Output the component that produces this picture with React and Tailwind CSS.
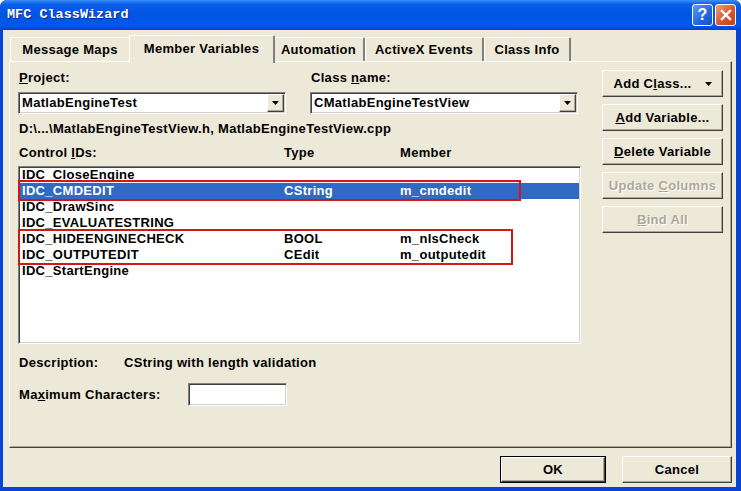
import React from 'react';

const raised =
  "border border-t-white border-l-white border-r-[#404040] border-b-[#404040] shadow-[inset_-1px_-1px_0_#aca899]";
const sunken =
  "border border-t-[#808080] border-l-[#808080] border-r-white border-b-white shadow-[inset_1px_1px_0_#404040,inset_-1px_-1px_0_#d4d0c8]";

const tabs = [
  { label: 'Message Maps', w: 'w-[121px]' },
  { label: 'Member Variables', w: 'w-[146px]', active: true },
  { label: 'Automation', w: 'w-[92px]' },
  { label: 'ActiveX Events', w: 'w-[119px]' },
  { label: 'Class Info', w: 'w-[87px]' },
];

const rows = [
  { id: 'IDC_CloseEngine' },
  { id: 'IDC_CMDEDIT', type: 'CString', member: 'm_cmdedit', selected: true },
  { id: 'IDC_DrawSinc' },
  { id: 'IDC_EVALUATESTRING' },
  { id: 'IDC_HIDEENGINECHECK', type: 'BOOL', member: 'm_nIsCheck' },
  { id: 'IDC_OUTPUTEDIT', type: 'CEdit', member: 'm_outputedit' },
  { id: 'IDC_StartEngine' },
];

const Arrow = () => (
  <svg width="7" height="4" viewBox="0 0 7 4">
    <path d="M0 0h7L3.5 4z" fill="#000" />
  </svg>
);

const Combo = ({ value }) => (
  <div className={`w-[268px] h-[22px] bg-white flex items-center pl-[3px] pr-[1px] ${sunken}`}>
    <span className="flex-1">{value}</span>
    <div className={`w-[17px] h-[18px] bg-[#ece9d8] flex items-center justify-center ${raised}`}>
      <Arrow />
    </div>
  </div>
);

const SideButton = ({ children, disabled }) => (
  <button
    type="button"
    className={`w-[121px] h-[27px] bg-[#ece9d8] flex items-center justify-center font-bold ${raised} ${
      disabled ? 'text-[#aca899] text-shadow-[1px_1px_0_#ffffff]' : 'text-black'
    }`}
  >
    {children}
  </button>
);

export default function App() {
  return (
    <div className="w-[741px] h-[491px] bg-[#0842d6] rounded-t-[7px] flex flex-col overflow-hidden font-['Liberation_Sans',Arial,sans-serif] text-[13px] tracking-[0.3px] leading-[16px] text-black">
      {/* Title bar */}
      <div className="h-[30px] shrink-0 flex items-center pl-[7px] pr-[5px] bg-[linear-gradient(180deg,#3d8ff7_0%,#0a5fe8_14%,#0054e3_45%,#0058eb_85%,#0040d0_100%)]">
        <span className="flex-1 text-white font-bold text-[13.5px] tracking-normal font-['Liberation_Mono',monospace] [text-shadow:1px_1px_0_#0a2a8c]">
          MFC ClassWizard
        </span>
        <div className="flex gap-[2px]">
          <div className="w-[21px] h-[22px] rounded-[3px] border border-white bg-[linear-gradient(135deg,#5f9cfb,#2462e0_60%,#1a4fcf)] flex items-center justify-center text-white font-bold text-[16px] tracking-normal">
            ?
          </div>
          <div className="w-[21px] h-[22px] rounded-[3px] border border-white bg-[linear-gradient(135deg,#f0a080,#d9552f_55%,#c33d1c)] flex items-center justify-center">
            <svg width="12" height="12" viewBox="0 0 12 12">
              <path d="M2 2L10 10M10 2L2 10" stroke="#fff" strokeWidth="2.4" strokeLinecap="square" />
            </svg>
          </div>
        </div>
      </div>

      {/* Body */}
      <div className="flex-1 ml-[3px] mr-[5px] mb-[4px] bg-[#ece9d8] flex flex-col pl-[6px] pr-[4px] pt-[5px]">
        {/* Tabs */}
        <div className="flex items-end h-[26px] ml-[1px]">
          {tabs.map((t) =>
            t.active ? (
              <div
                key={t.label}
                className={`${t.w} -mx-[2px] h-[28px] -mb-[2px] relative z-10 bg-[#ece9d8] border-t border-l border-t-white border-l-white border-r-2 border-r-[#808080] rounded-t-[2px] flex items-center justify-center pb-[2px] font-bold`}
              >
                {t.label}
              </div>
            ) : (
              <div
                key={t.label}
                className={`${t.w} h-[24px] border-t border-l border-t-white border-l-white border-r-2 border-r-[#808080] rounded-t-[2px] flex items-center justify-center font-bold`}
              >
                {t.label}
              </div>
            )
          )}
        </div>

        {/* Panel */}
        <div className="h-[387px] border border-t-white border-l-white border-r-[#404040] border-b-[#404040] shadow-[inset_-1px_-1px_0_#aca899] flex pl-[8px] pt-[1px]">
          <div className="w-[563px] flex flex-col">
            <div className="flex h-[16px] mt-[7px] pl-[1px]">
              <span className="w-[292px] font-bold">
                <u>P</u>roject:
              </span>
              <span className="font-bold">
                Class <u>n</u>ame:
              </span>
            </div>
            <div className="flex gap-[24px] mt-[6px] font-bold">
              <Combo value="MatlabEngineTest" />
              <Combo value="CMatlabEngineTestView" />
            </div>
            <div className="h-[16px] mt-[7px] pl-[1px] font-bold">
              D:\...\MatlabEngineTestView.h, MatlabEngineTestView.cpp
            </div>
            <div className="flex h-[16px] mt-[8px] pl-[1px] font-bold">
              <span className="w-[265px]">
                Control <u>I</u>Ds:
              </span>
              <span className="w-[116px]">Type</span>
              <span>Member</span>
            </div>

            {/* List */}
            <div className={`relative h-[178px] mt-[5px] bg-white px-[1px] ${sunken}`}>
              {rows.map((r) => (
                <div
                  key={r.id}
                  className={`flex h-[16px] items-center pl-[2px] font-bold ${
                    r.selected ? 'bg-[#316ac5] text-white' : ''
                  }`}
                >
                  <span className="w-[262px]">{r.id}</span>
                  <span className="w-[116px]">{r.type}</span>
                  <span>{r.member}</span>
                </div>
              ))}
              <div className="absolute left-[-1px] top-[13px] w-[503px] h-[21px] border-2 border-[#d01818]" />
              <div className="absolute left-[-1px] top-[62px] w-[495px] h-[36px] border-2 border-[#d01818]" />
            </div>

            <div className="flex h-[16px] mt-[11px] pl-[1px] font-bold">
              <span className="w-[105px]">Description:</span>
              <span>CString with length validation</span>
            </div>
            <div className="flex items-center h-[23px] mt-[12px] pl-[1px] font-bold">
              <span className="w-[169px]">
                Ma<u>x</u>imum Characters:
              </span>
              <div className={`w-[99px] h-[23px] bg-white ${sunken}`} />
            </div>
          </div>

          {/* Side buttons */}
          <div className="ml-[21px] pt-[7px] flex flex-col gap-[7px]">
            <SideButton>
              <span>
                Add C<u>l</u>ass...
              </span>
              <span className="ml-[13px] flex">
                <Arrow />
              </span>
            </SideButton>
            <SideButton>
              <span>
                <u>A</u>dd Variable...
              </span>
            </SideButton>
            <SideButton>
              <span>
                <u>D</u>elete Variable
              </span>
            </SideButton>
            <SideButton disabled>
              <span>
                Update <u>C</u>olumns
              </span>
            </SideButton>
            <SideButton disabled>
              <span>
                <u>B</u>ind All
              </span>
            </SideButton>
          </div>
        </div>

        {/* Bottom buttons */}
        <div className="flex justify-end gap-[16px] mt-[8px]">
          <div className="border border-black">
            <button
              type="button"
              className={`w-[104px] h-[25px] bg-[#ece9d8] font-bold flex items-center justify-center ${raised}`}
            >
              OK
            </button>
          </div>
          <button
            type="button"
            className={`w-[110px] h-[27px] bg-[#ece9d8] font-bold flex items-center justify-center ${raised}`}
          >
            Cancel
          </button>
        </div>
      </div>
    </div>
  );
}
